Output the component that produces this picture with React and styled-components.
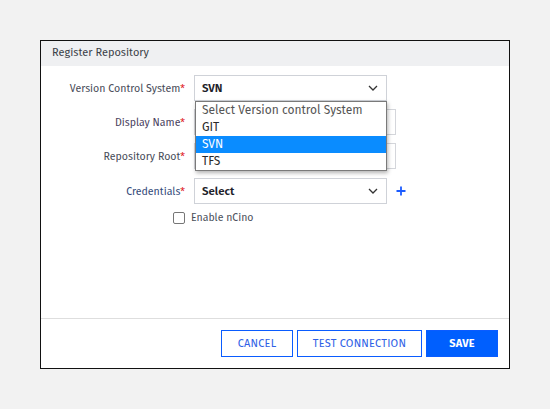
import React from "react";
import styled, { createGlobalStyle } from "styled-components";

const GlobalStyle = createGlobalStyle`
  html, body { margin: 0; padding: 0; }
  body {
    background: #f2f2f2;
    font-family: "Fira Sans", Roboto, "Liberation Sans", sans-serif;
  }
  * { box-sizing: border-box; }
`;

const Page = styled.div`
  width: 550px;
  height: 409px;
  padding: 40px 0 0 40px;
`;

const Modal = styled.div`
  width: 470px;
  height: 329px;
  background: #fff;
  border: 1px solid #111;
  display: flex;
  flex-direction: column;
`;

const Header = styled.div`
  height: 25px;
  background: #eff0f2;
  padding: 0 11px;
  font-size: 11px;
  line-height: 24px;
  color: #3b3f48;
`;

const Body = styled.div`
  flex: 1;
  padding-top: 9px;
  display: flex;
  flex-direction: column;
  gap: 8px;
`;

const Row = styled.div`
  display: grid;
  grid-template-columns: 144px auto;
  column-gap: 9px;
  align-items: center;
  margin-top: ${(p) => p.$offset || 0}px;
`;

const Label = styled.label`
  text-align: right;
  font-size: 10.6px;
  color: ${(p) => p.$color || "#474c58"};
`;

const Req = styled.span`
  color: #e0252b;
`;

const Field = styled.div`
  position: relative;
  display: flex;
  align-items: center;
  gap: 9px;
`;

const SelectBox = styled.div`
  width: 193px;
  height: 26px;
  border: 1px solid #cfd2d8;
  background: #fff;
  display: flex;
  align-items: center;
  justify-content: space-between;
  padding: 0 8px 0 7px;
  font-size: 11.5px;
  font-weight: 600;
  color: #1d2129;
`;

const Input = styled.div`
  width: 202px;
  height: 26px;
  border: 1px solid #d4d6db;
  background: #fff;
`;

const Menu = styled.ul`
  position: absolute;
  top: 26px;
  left: 1px;
  width: 192px;
  margin: 0;
  padding: 0;
  list-style: none;
  background: #fff;
  border: 1px solid #7a7a7a;
  box-shadow: 1px 2px 4px rgba(0, 0, 0, 0.3);
  z-index: 2;
`;

const Option = styled.li`
  height: 17px;
  line-height: 17px;
  padding: 0 6px;
  font-size: 12px;
  color: ${(p) => (p.$active ? "#fff" : p.$placeholder ? "#555" : "#2a2a2a")};
  background: ${(p) => (p.$active ? "#0a8cff" : "transparent")};
`;

const CheckRow = styled.label`
  display: flex;
  align-items: center;
  gap: 6px;
  padding-left: 132px;
  margin-top: -1px;
  font-size: 10.5px;
  color: #4a4f5a;
`;

const Box = styled.span`
  width: 12px;
  height: 12px;
  border: 1px solid #767676;
  border-radius: 2px;
  background: #fff;
`;

const Footer = styled.div`
  border-top: 1px solid #dedede;
  padding: 11px 11px 11px;
  display: flex;
  justify-content: flex-end;
  gap: 4px;
`;

const Button = styled.button`
  height: 27px;
  width: ${(p) => p.$w}px;
  padding: 0;
  font-family: inherit;
  font-size: 11px;
  letter-spacing: 0.2px;
  font-weight: ${(p) => (p.$primary ? 700 : 400)};
  color: ${(p) => (p.$primary ? "#fff" : "#2f5fe6")};
  background: ${(p) => (p.$primary ? "#005ffe" : "#fff")};
  border: 1px solid #0a5cff;
`;

const Chevron = () => (
  <svg width="10" height="6" viewBox="0 0 10 6" fill="none">
    <path d="M1 1l4 4 4-4" stroke="#333" strokeWidth="1.3" />
  </svg>
);

const PlusIcon = () => (
  <svg width="10" height="10" viewBox="0 0 10 10" fill="none">
    <path d="M5 0.5v9M0.5 5h9" stroke="#1c5cff" strokeWidth="1.8" />
  </svg>
);

export default function App() {
  return (
    <>
      <GlobalStyle />
      <Page>
        <Modal>
          <Header>Register Repository</Header>
          <Body>
            <Row>
              <Label>
                Version Control System<Req>*</Req>
              </Label>
              <Field>
                <SelectBox>
                  SVN
                  <Chevron />
                </SelectBox>
                <Menu>
                  <Option $placeholder>Select Version control System</Option>
                  <Option>GIT</Option>
                  <Option $active>SVN</Option>
                  <Option>TFS</Option>
                </Menu>
              </Field>
            </Row>
            <Row>
              <Label $color="#4a3f5e">
                Display Name<Req>*</Req>
              </Label>
              <Field>
                <Input />
              </Field>
            </Row>
            <Row>
              <Label>
                Repository Root<Req>*</Req>
              </Label>
              <Field>
                <Input />
              </Field>
            </Row>
            <Row $offset={1}>
              <Label $color="#334a7a">
                Credentials<Req>*</Req>
              </Label>
              <Field>
                <SelectBox>
                  Select
                  <Chevron />
                </SelectBox>
                <PlusIcon />
              </Field>
            </Row>
            <CheckRow>
              <Box />
              Enable nCino
            </CheckRow>
          </Body>
          <Footer>
            <Button $w={72}>CANCEL</Button>
            <Button $w={125}>TEST CONNECTION</Button>
            <Button $w={72} $primary>
              SAVE
            </Button>
          </Footer>
        </Modal>
      </Page>
    </>
  );
}
